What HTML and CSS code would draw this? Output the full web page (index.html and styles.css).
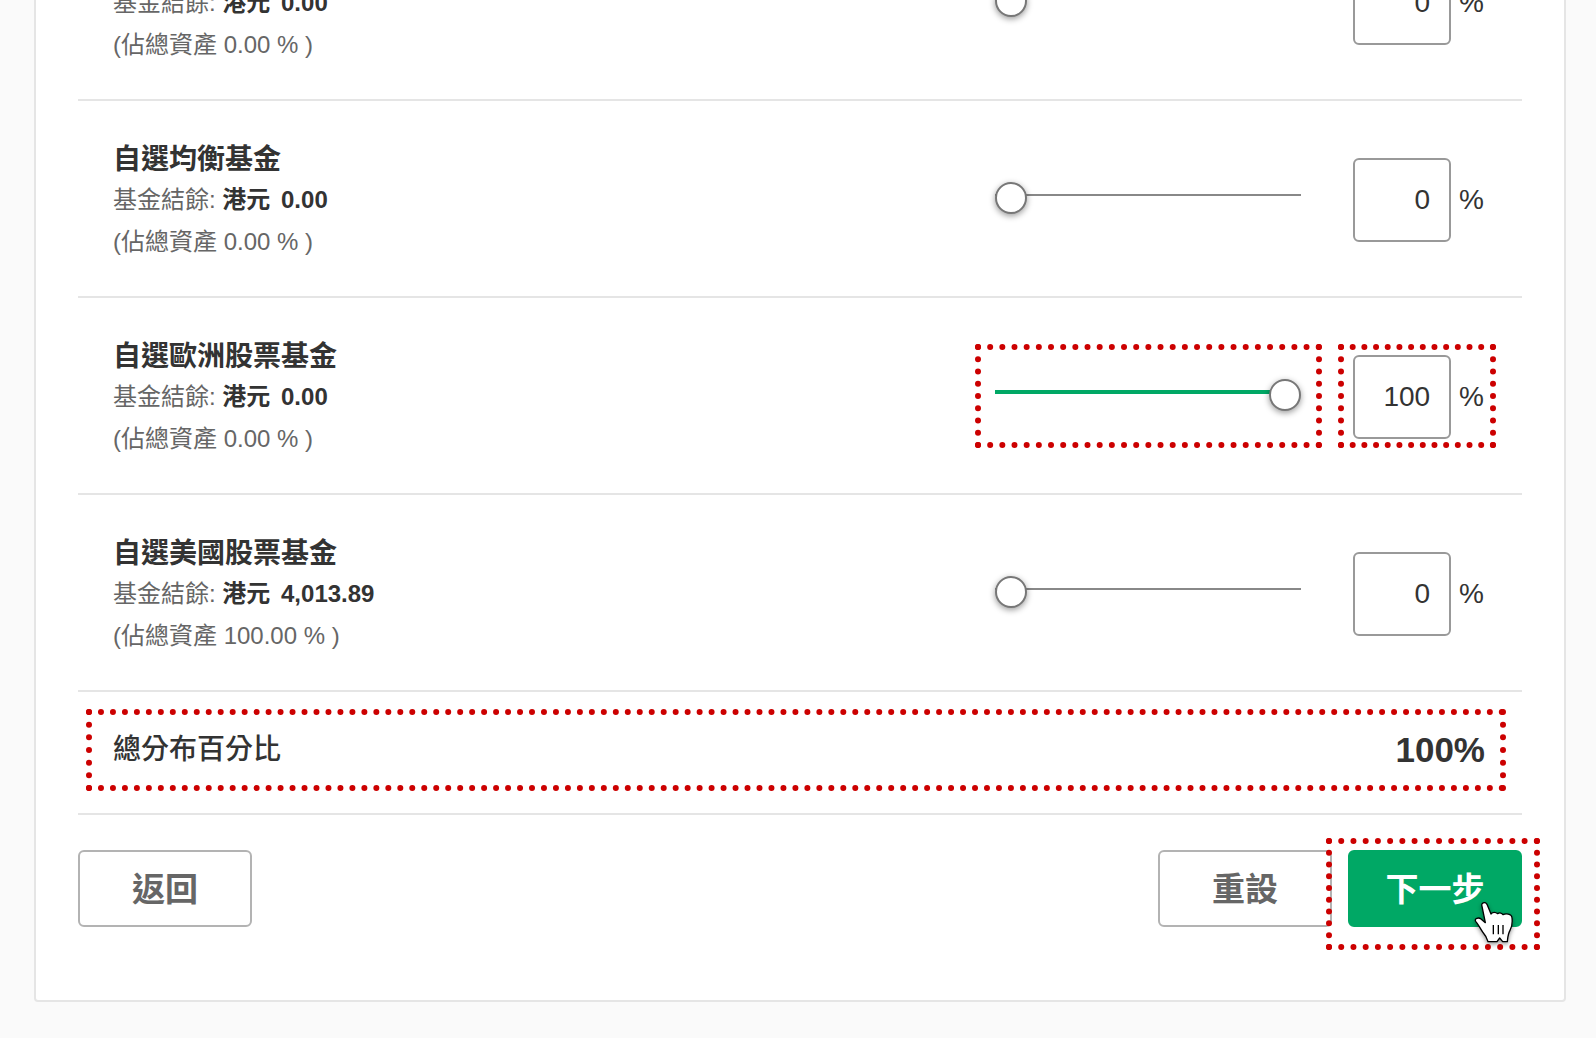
FILE: index.html
```html
<!DOCTYPE html>
<html lang="zh-Hant">
<head>
<meta charset="utf-8">
<meta name="viewport" content="width=device-width, initial-scale=1">
<title>基金分布</title>
<link rel="stylesheet" href="styles.css">
</head>
<body>
<main class="card">
  <section class="fund">
    <div class="info info-untitled">
      <p class="line">基金結餘: <strong>港元 <span class="value">0.00</span></strong></p>
      <p class="line">(佔總資產 0.00 % )</p>
    </div>
    <div class="slider-cell"><input class="slider" type="range" min="0" max="100" value="0" aria-label="分布"></div>
    <label class="percent"><input class="amount" type="text" value="0"><span>%</span></label>
  </section>
  <section class="fund">
    <div class="info">
      <h2 class="name">自選均衡基金</h2>
      <p class="line">基金結餘: <strong>港元 <span class="value">0.00</span></strong></p>
      <p class="line">(佔總資產 0.00 % )</p>
    </div>
    <div class="slider-cell"><input class="slider" type="range" min="0" max="100" value="0" aria-label="自選均衡基金"></div>
    <label class="percent"><input class="amount" type="text" value="0"><span>%</span></label>
  </section>
  <section class="fund">
    <div class="info">
      <h2 class="name">自選歐洲股票基金</h2>
      <p class="line">基金結餘: <strong>港元 <span class="value">0.00</span></strong></p>
      <p class="line">(佔總資產 0.00 % )</p>
    </div>
    <div class="slider-cell marked"><input class="slider slider-full" type="range" min="0" max="100" value="100" aria-label="自選歐洲股票基金"></div>
    <label class="percent marked"><input class="amount" type="text" value="100"><span>%</span></label>
  </section>
  <section class="fund">
    <div class="info">
      <h2 class="name">自選美國股票基金</h2>
      <p class="line">基金結餘: <strong>港元 <span class="value">4,013.89</span></strong></p>
      <p class="line">(佔總資產 100.00 % )</p>
    </div>
    <div class="slider-cell"><input class="slider" type="range" min="0" max="100" value="0" aria-label="自選美國股票基金"></div>
    <label class="percent"><input class="amount" type="text" value="0"><span>%</span></label>
  </section>
  <section class="total">
    <div class="total-box">
      <span class="total-label">總分布百分比</span>
      <strong class="total-value">100%</strong>
    </div>
  </section>
  <div class="actions">
    <button class="btn" type="button">返回</button>
    <div class="actions-end">
      <button class="btn" type="button">重設</button>
      <div class="next marked">
        <button class="btn btn-primary" type="button">下一步</button>
        <svg class="pointer" viewBox="104 60 120 126" width="40" height="42" aria-hidden="true">
          <path d="M128 76C124 65 138 61 143 70L155 99C160 92 170 93 175 98C181 94 188 96 191 101C198 97 217 97 218 110C220 128 218 138 212 148C206 158 206 164 204 182L190 182L181 171L173 182L146 182C143 170 136 160 130 153C122 142 117 130 109 121C104 112 118 108 125 114L138 125Z" fill="#fff" stroke="#000" stroke-width="4" stroke-linejoin="round"/>
          <path d="M162 132V160M177 132V160M191 132V160" stroke="#000" stroke-width="4"/>
        </svg>
      </div>
    </div>
  </div>
</main>
</body>
</html>
```
FILE: styles.css
```css
* {
  box-sizing: border-box;
}

body {
  margin: 0;
  background: #fafafa;
  color: #333;
  font-family: "Liberation Sans", "Noto Sans CJK TC", sans-serif;
  overflow-x: hidden;
}

/* The list is scrolled so that its first row starts above the window. */
.card {
  margin: -98px 30px 37px 34px;
  padding: 0 42px 73px;
  background: #fff;
  border: 2px solid #e5e5e5;
  border-radius: 4px;
}

.fund {
  display: flex;
  align-items: center;
  padding: 36px 38px 33px 35px;
  border-bottom: 2px solid #e5e5e5;
}

.info {
  flex: 1;
}

.info-untitled {
  padding-top: 42px;
}

.name {
  margin: 0;
  padding-top: 4px;
  font-size: 28px;
  line-height: 38px;
  font-weight: 600;
}

.line {
  margin: 0;
  font-size: 24px;
  line-height: 42px;
  color: #666;
}

.line strong {
  color: #333;
}

.value {
  margin-left: 4px;
}

.slider-cell {
  width: 306px;
  height: 84px;
  padding-top: 24px;
  margin-right: 52px;
}

.slider {
  display: block;
  width: 100%;
  height: 32px;
  margin: 0;
  appearance: none;
  -webkit-appearance: none;
  background: linear-gradient(#888, #888) 0 12px / 100% 2px no-repeat;
}

.slider-full {
  background: linear-gradient(#00a865, #00a865) 0 11px / calc(100% - 16px) 4px no-repeat;
}

.slider::-webkit-slider-thumb {
  -webkit-appearance: none;
  width: 32px;
  height: 32px;
  border: 2px solid #777;
  border-radius: 50%;
  background: #fff;
  box-shadow: 0 2px 6px rgba(0, 0, 0, 0.4);
}

.percent {
  display: flex;
  align-items: center;
  gap: 8px;
  font-size: 28px;
}

.amount {
  width: 98px;
  height: 84px;
  padding: 0 19px 0 0;
  border: 2px solid #999;
  border-radius: 6px;
  background: #fff;
  color: #333;
  font: inherit;
  text-align: right;
}

/* Dotted highlight round the step that is being explained. */
.marked {
  position: relative;
}

.marked::after {
  content: "";
  position: absolute;
  border: 6px dotted #c00;
  pointer-events: none;
}

.slider-cell.marked::after {
  inset: -11px -21px -9px -20px;
}

.percent.marked::after {
  inset: -11px -12px -9px -15px;
}

.next.marked::after {
  inset: -12px -18px -23px -22px;
}

.total {
  padding: 17px 16px 22px 8px;
  border-bottom: 2px solid #e5e5e5;
}

.total-box {
  display: flex;
  align-items: center;
  justify-content: space-between;
  height: 82px;
  padding: 0 15px 6px 21px;
  border: 6px dotted #c00;
}

.total-label {
  font-size: 28px;
  font-weight: 500;
}

.total-value {
  padding-top: 6px;
  font-size: 35px;
}

.actions,
.actions-end {
  display: flex;
  justify-content: space-between;
}

.actions {
  padding-top: 35px;
}

.actions-end {
  gap: 16px;
}

.btn {
  display: block;
  width: 174px;
  height: 77px;
  padding: 0 0 4px;
  border: 2px solid #b3b3b3;
  border-radius: 6px;
  background: #fff;
  color: #666;
  font: 600 33px "Liberation Sans", "Noto Sans CJK TC", sans-serif;
}

.btn-primary {
  border-color: #00a865;
  background: #00a865;
  color: #fff;
}

.pointer {
  position: absolute;
  left: 126px;
  top: 51px;
  z-index: 1;
  filter: drop-shadow(0 2px 2px rgba(0, 0, 0, 0.4));
}
```
